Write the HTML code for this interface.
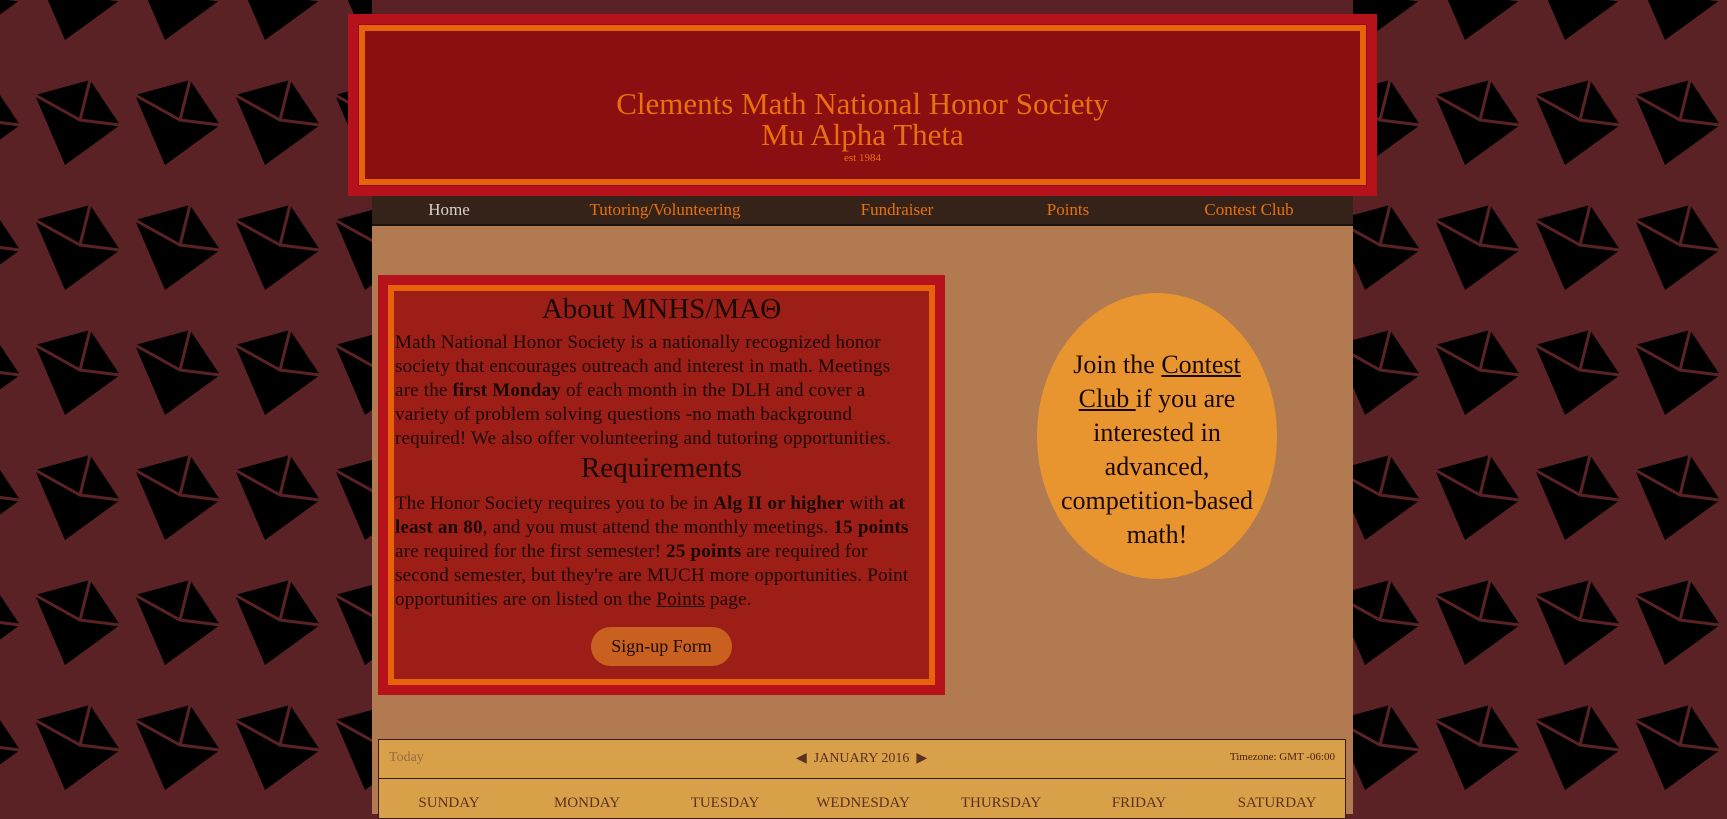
<!DOCTYPE html>
<html><head><meta charset="utf-8"><style>
*{margin:0;padding:0;box-sizing:border-box}
body{width:1727px;height:814px;overflow:hidden;background:#5b2225;position:relative;font-family:"Liberation Serif",serif}
.bgsvg{position:absolute;left:0;top:0}
.hdr{position:absolute;left:348px;top:14px;width:1029px;height:182px;background:#8b0e10;border:10px solid #b5121b}
.hdr .in{position:absolute;left:1px;top:1px;right:1px;bottom:1px;border:6px solid #e8620c}
.t1,.t2{position:absolute;left:0;width:100%;text-align:center;color:#e8700f;font-size:31px}
.t1{top:62px}.t2{top:93px}
.t3{position:absolute;left:0;width:100%;top:128px;text-align:center;color:#e8700f;font-size:11px}
.nav{position:absolute;left:372px;top:196px;width:981px;height:30px;background:#35231a;border-bottom:2px solid #1c120c}
.nav span{position:absolute;top:4px;font-size:17px;color:#e8700f;transform:translateX(-50%);white-space:nowrap}
.main{position:absolute;left:372px;top:226px;width:981px;height:588px;background:#b17a50}
.about{position:absolute;left:378px;top:275px;width:567px;height:420px;background:#9c1e17;border:10px solid #b5121b}
.about .in{position:absolute;left:0;top:0;right:0;bottom:0;border:6px solid #e8620c}
.txt{position:absolute;left:395px;width:515px;color:#1a0a06;font-size:19px;line-height:24px;letter-spacing:.2px}
h2{position:absolute;left:378px;width:567px;text-align:center;font-weight:normal;font-size:29px;color:#1a0a06}
.btn{position:absolute;left:591px;top:627px;width:141px;height:39px;border-radius:20px;background:#c9601f;color:#1a0a06;font-size:18px;text-align:center;line-height:39px}
.circ{position:absolute;left:1037px;top:293px;width:240px;height:286px;border-radius:50%;background:#e8942f;color:#1a0a06;font-size:26px;line-height:34px;text-align:center;padding:55px 22px 0}
u{text-decoration:underline}
.cal{position:absolute;left:378px;top:739px;width:968px;height:80px;background:#d9a04a;border:1px solid #3a1a10}
.cal .bar{height:39px;border-bottom:1px solid #3a1a10;position:relative;font-size:14px}
.days span{position:absolute;top:55px;font-size:15px;color:#5a3020;transform:translateX(-50%)}
</style></head><body>
<svg class="bgsvg" width="1727" height="814">
<defs><pattern id="p" width="100" height="125" patternUnits="userSpaceOnUse" x="30" y="-50">
<polygon points="5,20 60,5 90,50 35,90" fill="#000"/>
<polyline points="5,20 50,45 90,50 M50,45 35,90" fill="none" stroke="#5b2225" stroke-width="3"/>
<polyline points="60,5 50,45" fill="none" stroke="#5b2225" stroke-width="3"/>
</pattern></defs>
<rect x="0" y="0" width="372" height="814" fill="url(#p)"/>
<rect x="1353" y="0" width="374" height="814" fill="url(#p)"/>
</svg>
<div class="hdr"><div class="in"></div>
<div class="t1">Clements Math National Honor Society</div>
<div class="t2">Mu Alpha Theta</div>
<div class="t3">est 1984</div></div>
<div class="nav">
<span style="left:77px;color:#d8d0c8">Home</span>
<span style="left:293px">Tutoring/Volunteering</span>
<span style="left:525px">Fundraiser</span>
<span style="left:696px">Points</span>
<span style="left:877px">Contest Club</span>
</div>
<div class="main"></div>
<div class="about"><div class="in"></div></div>
<h2 style="top:293px">About MNHS/MAΘ</h2>
<div class="txt" style="top:331px">Math National Honor Society is a nationally recognized honor society that encourages outreach and interest in math. Meetings are the <b>first Monday</b> of each month in the DLH and cover a variety of problem solving questions -no math background required! We also offer volunteering and tutoring opportunities.</div>
<h2 style="top:452px">Requirements</h2>
<div class="txt" style="top:492px">The Honor Society requires you to be in <b>Alg II or higher</b> with <b>at least an 80</b>, and you must attend the monthly meetings. <b>15 points</b> are required for the first semester! <b>25 points</b> are required for second semester, but they're are MUCH more opportunities. Point opportunities are on listed on the <u>Points</u> page.</div>
<div class="btn">Sign-up Form</div>
<div class="circ">Join the <u>Contest Club </u>if you are interested in advanced, competition-based math!</div>
<div class="cal"><div class="bar">
<span style="position:absolute;left:10px;top:10px;color:#9a6a40">Today</span>
<span style="position:absolute;left:417px;top:10px;color:#5a3020">◀&nbsp; JANUARY 2016 &nbsp;▶</span>
<span style="position:absolute;right:10px;top:11px;font-size:11px;color:#4a2010">Timezone: GMT -06:00</span>
</div>
<div class="days">
<span style="left:70px">SUNDAY</span><span style="left:208px">MONDAY</span><span style="left:346px">TUESDAY</span><span style="left:484px">WEDNESDAY</span><span style="left:622px">THURSDAY</span><span style="left:760px">FRIDAY</span><span style="left:898px">SATURDAY</span>
</div></div>
</body></html>
